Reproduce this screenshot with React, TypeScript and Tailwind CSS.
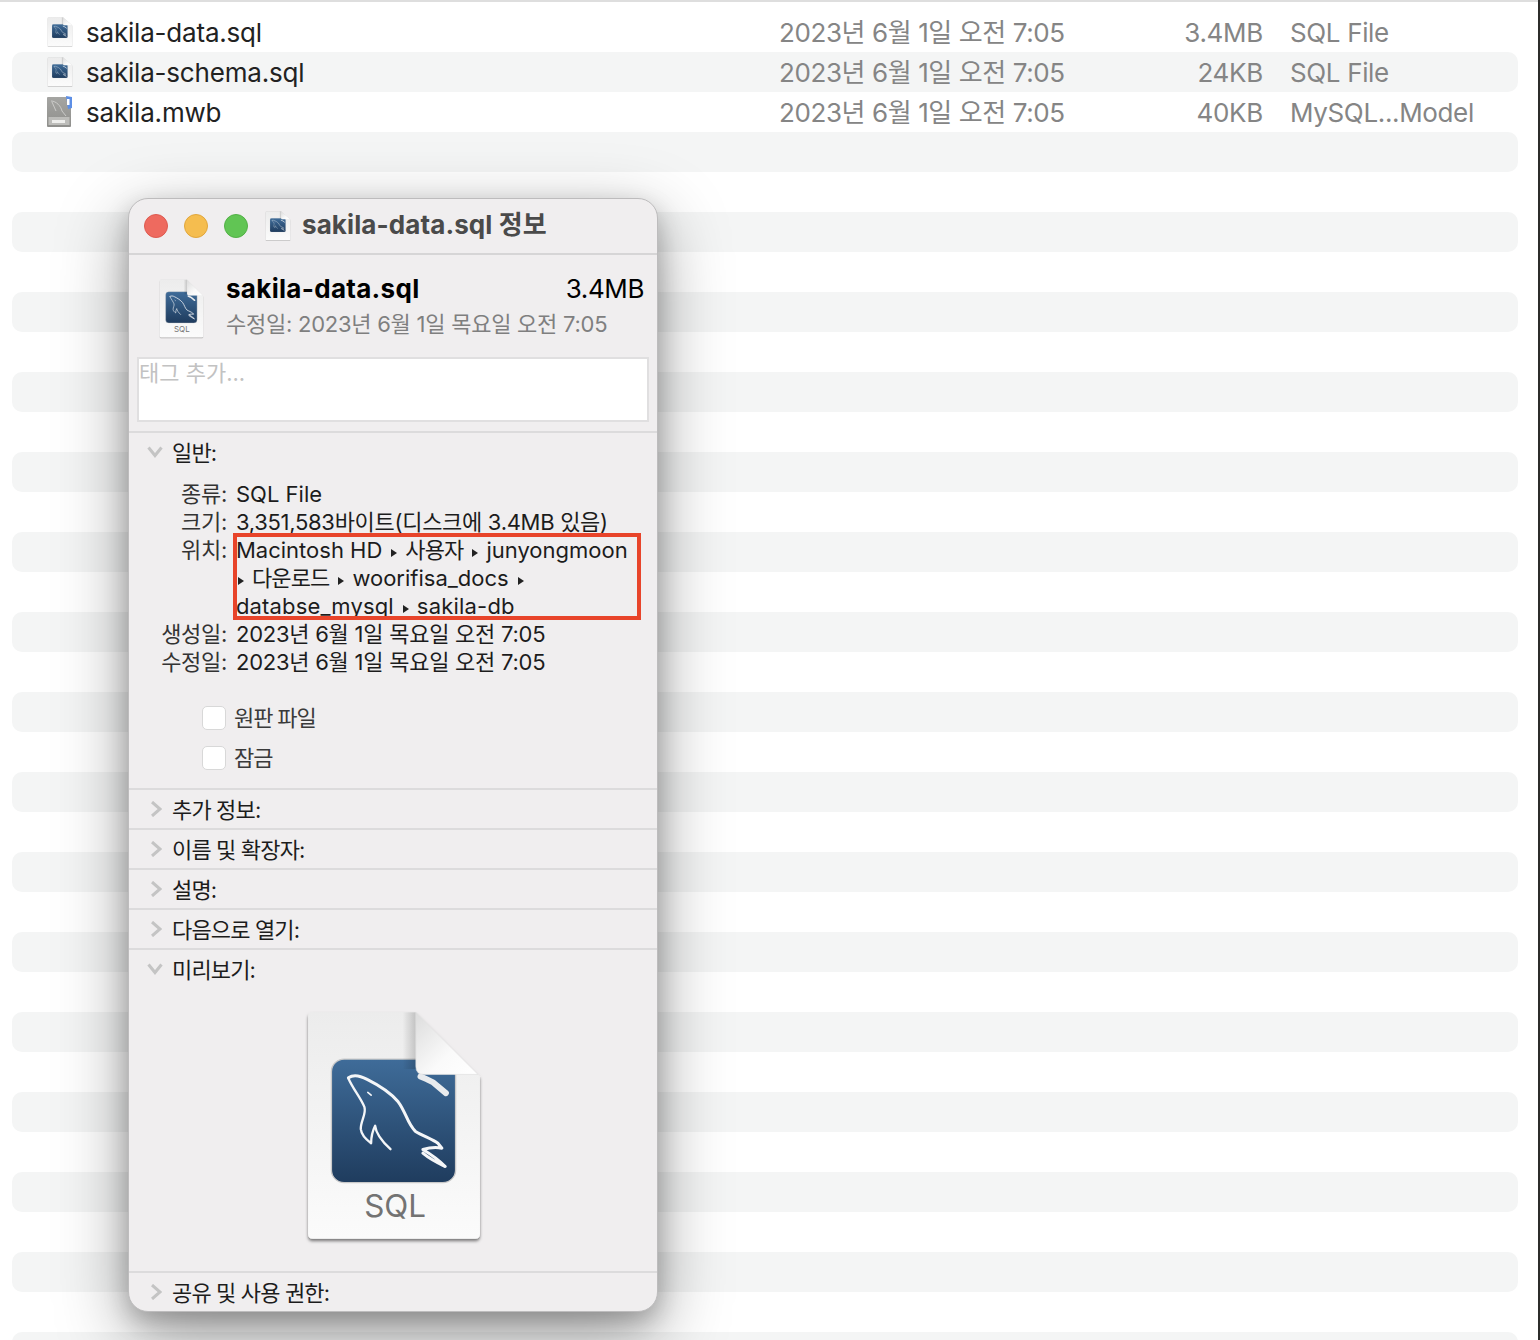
const sans = "font-['Inter','Noto_Sans_CJK_KR',sans-serif]";

const files = [
  { name: "sakila-data.sql", size: "3.4MB", kind: "SQL File", model: false },
  { name: "sakila-schema.sql", size: "24KB", kind: "SQL File", model: false },
  { name: "sakila.mwb", size: "40KB", kind: "MySQL...Model", model: true },
];

const SqlIcon = ({ label = false, className = "" }: { label?: boolean; className?: string }) => (
  <svg viewBox="40 30 545 710" preserveAspectRatio={label ? "xMidYMid meet" : "none"} className={className}>
    <defs>
      <linearGradient id="box" x1="0" y1="0" x2="0" y2="1">
        <stop offset="0" stopColor="#3f6c99" />
        <stop offset="1" stopColor="#1f3c5e" />
      </linearGradient>
      <linearGradient id="paper" x1="0" y1="0" x2="0" y2="1">
        <stop offset="0" stopColor="#ececec" />
        <stop offset="1" stopColor="#fbfbfb" />
      </linearGradient>
      <linearGradient id="fold" x1="0" y1="0" x2="1" y2="1">
        <stop offset="0" stopColor="#dcdcdc" />
        <stop offset=".6" stopColor="#fafafa" />
        <stop offset="1" stopColor="#ffffff" />
      </linearGradient>
      <linearGradient id="foldShade" x1="0" y1="0" x2="1" y2="0">
        <stop offset="0" stopColor="#000" stopOpacity="0" />
        <stop offset="1" stopColor="#000" stopOpacity=".18" />
      </linearGradient>
      <filter id="docShadow" x="-10%" y="-10%" width="120%" height="120%">
        <feDropShadow dx="0" dy="7" stdDeviation="5" floodColor="#000" floodOpacity=".5" />
      </filter>
    </defs>
    <path
      d="M68 40 H378 L570 232 V704 Q570 718 556 718 H69 Q55 718 55 704 V53 Q55 40 68 40 Z"
      fill="url(#paper)"
      filter="url(#docShadow)"
    />
    <g transform={label ? undefined : "translate(35 45) scale(.88)"}>
      <rect x="125" y="180" width="372" height="370" rx="38" fill="url(#box)" stroke="#c9c9c9" strokeWidth="4" />
      <g fill="none" stroke="#f4f6f8" strokeLinecap="round" strokeLinejoin="round">
        <path
          d="M176 236 C190 226 212 230 232 241 C262 256 300 278 325 308 C348 338 352 372 376 396 C398 410 428 420 444 432 L456 447 C436 443 416 446 399 451 C424 466 448 484 466 502 C440 490 418 478 399 462"
          strokeWidth="9"
        />
        <path
          d="M176 238 C190 270 214 298 224 324 C230 346 212 366 213 390 C215 408 230 422 244 432 C244 412 248 396 256 380 C258 400 276 426 302 450"
          strokeWidth="7"
        />
        <path d="M234 280 L244 288" strokeWidth="5" />
      </g>
      <path d="M392 232 L410 240 L430 250 L468 282" stroke="#e8ebee" strokeWidth="18" strokeLinecap="round" fill="none" />
    </g>
    <rect x="338" y="40" width="40" height="170" fill="url(#foldShade)" />
    <path d="M378 40 L564 226 H402 Q378 226 378 202 Z" fill="url(#fold)" stroke="#dedede" strokeWidth="2" />
    {label && (
      <text x="316" y="652" textAnchor="middle" fontSize="94" fill="#737373" fontFamily="Inter, sans-serif">
        SQL
      </text>
    )}
  </svg>
);

const ModelIcon = ({ className = "" }: { className?: string }) => (
  <svg viewBox="0 0 26 32" className={className}>
    <defs>
      <linearGradient id="gray" x1="0" y1="0" x2="0" y2="1">
        <stop offset="0" stopColor="#a5a5a2" />
        <stop offset="1" stopColor="#8f8f8c" />
      </linearGradient>
    </defs>
    <rect x="0" y="1" width="24" height="30" rx="1" fill="url(#gray)" />
    <rect x="1.5" y="21" width="21" height="8" fill="#bdbdba" />
    <rect x="5" y="24" width="13" height="3" fill="#eeeeec" />
    <path d="M4 5 C9 5 14 10 15 15 L19 20 M5 6 L9 15" stroke="#cfcfcd" strokeWidth=".9" fill="none" />
    <path d="M19 0 L25 1 V12 L21 13 Z" fill="#5d8fe6" />
    <rect x="20" y="3" width="2.5" height="6" fill="#fff" />
  </svg>
);

const Triangle = ({ first = false }: { first?: boolean }) => (
  <svg viewBox="0 0 6 8" className={`inline-block w-[6px] h-[8px] align-[1px] mr-[8px] ${first ? "ml-[2px]" : "ml-[9px]"}`}>
    <path d="M0 0 L6 4 L0 8 Z" fill="#222" />
  </svg>
);

const Chevron = ({ open = false }: { open?: boolean }) =>
  open ? (
    <svg viewBox="0 0 16 12" className="w-4 h-3 ml-[18px] mr-[9px]">
      <path d="M1.5 1.5 L8 9.5 L14.5 1.5" stroke="#c4c4c4" strokeWidth="3" fill="none" />
    </svg>
  ) : (
    <svg viewBox="0 0 12 16" className="w-3 h-4 ml-[21px] mr-[10px]">
      <path d="M2 1 L10 8 L2 15" stroke="#c4c4c4" strokeWidth="3" fill="none" />
    </svg>
  );

const SectionHead = ({ title, open = false }: { title: string; open?: boolean }) => (
  <div className="flex items-center h-10 shrink-0 text-[22px] tracking-[-0.85px] text-[#1c1c1c] border-t-2 border-[#dcdbdc]">
    <Chevron open={open} />
    <span className="pt-[2px]">{title}</span>
  </div>
);

const Detail = ({ label, children }: { label: string; children: React.ReactNode }) => (
  <div className="grid grid-cols-[98px_1fr] gap-x-[9px] leading-7 text-[22px] text-[#1c1c1c]">
    <span className="text-right text-[#333] tracking-[-0.3px]">{label}</span>
    <div className="whitespace-nowrap">{children}</div>
  </div>
);

const Ko = ({ children }: { children: React.ReactNode }) => <span className="tracking-[-0.9px]">{children}</span>;

const Check = ({ label }: { label: string }) => (
  <div className="flex items-center gap-2 h-10 pl-[73px] text-[22px] tracking-[-1.1px] text-[#3a3a3a]">
    <span className="w-6 h-6 rounded-[5px] bg-white border border-[#d8d8d8]" />
    {label}
  </div>
);

export default function App() {
  return (
    <div className={`relative h-[1340px] overflow-hidden bg-white flex ${sans}`}>
      {/* finder list */}
      <div className="flex-1 border-t-2 border-[#dedede] pt-[10px] pl-3 pr-5">
        {Array.from({ length: 34 }).map((_, i) => {
          const f = files[i];
          return (
            <div
              key={i}
              className={`grid grid-cols-[767px_321px_163px_1fr] items-center h-10 rounded-[10px] text-[26px] ${
                i % 2 === 1 ? "bg-[#f4f5f5]" : ""
              }`}
            >
              {f && (
                <>
                  <div className="flex items-center pl-[35px] text-[#222] tracking-[-0.2px]">
                    {f.model ? (
                      <ModelIcon className="w-[26px] h-8 mr-[13px]" />
                    ) : (
                      <SqlIcon className="w-[26px] h-[30px] mr-[13px]" />
                    )}
                    <span className="pt-px">{f.name}</span>
                  </div>
                  <div className="pt-px text-[#858585] tracking-[-0.4px]">2023년 6월 1일 오전 7:05</div>
                  <div className="pt-px text-right text-[#858585] tracking-[-0.3px]">{f.size}</div>
                  <div className="pt-px pl-[27px] text-[#858585] tracking-[-0.35px] whitespace-nowrap">{f.kind}</div>
                </>
              )}
            </div>
          );
        })}
      </div>
      <div className="w-[2px] bg-[#2c2c2a]" />

      {/* info window */}
      <div className="absolute left-[128px] top-[198px] w-[530px] h-[1114px] flex flex-col rounded-[20px] bg-[#f0eeef] border border-[#bdbcbd] overflow-hidden shadow-[0_22px_70px_rgba(0,0,0,0.38),0_10px_25px_rgba(0,0,0,0.22)]">
        <div className="flex items-center h-[56px] shrink-0 border-b-2 border-[#d6d5d6] pl-[15px]">
          <span className="w-6 h-6 rounded-full bg-[#ee6a5f] border border-[#dd5a50]" />
          <span className="w-6 h-6 rounded-full bg-[#f5bd4f] border border-[#e0a63c] ml-4" />
          <span className="w-6 h-6 rounded-full bg-[#61c554] border border-[#52b046] ml-4" />
          <SqlIcon className="w-[26px] h-[30px] ml-[17px] mr-[11px]" />
          <span className="pb-1 text-[26px] font-bold text-[#4a4a4a] tracking-[0.1px]">sakila-data.sql 정보</span>
        </div>

        <div className="flex h-[102px] shrink-0 pl-[29px] pr-[13px]">
          <SqlIcon label className="w-[47px] h-[60px] mt-[24px] mr-[21px]" />
          <div className="flex-1 pt-[16px]">
            <div className="flex justify-between text-[26px] leading-9 text-black">
              <span className="font-bold tracking-[0.3px]">sakila-data.sql</span>
              <span className="tracking-[-0.4px]">3.4MB</span>
            </div>
            <div className="text-[22px] leading-[34px] tracking-[-0.25px] text-[#7f7f7f]">수정일: 2023년 6월 1일 목요일 오전 7:05</div>
          </div>
        </div>

        <div className="mx-2 h-[65px] shrink-0 bg-white border-2 border-[#e0dfe0] text-[22px] leading-7 text-[#c2c2c2]">
          태그 추가...
        </div>

        <div className="mt-[9px] shrink-0">
          <SectionHead title="일반:" open />
          <div className="relative pt-[9px]">
            <Detail label="종류:">SQL File</Detail>
            <Detail label="크기:">
              <span className="tracking-[-0.3px]">3,351,583바이트(디스크에 3.4MB 있음)</span>
            </Detail>
            <Detail label="위치:">
              Macintosh HD
              <Triangle />
              <Ko>사용자</Ko>
              <Triangle />
              junyongmoon
            </Detail>
            <Detail label="">
              <Triangle first />
              <Ko>다운로드</Ko>
              <Triangle />
              woorifisa_docs
              <Triangle />
            </Detail>
            <Detail label="">
              <span className="tracking-[0.15px]">databse_mysql</span>
              <Triangle />
              <span className="tracking-[0.2px]">sakila-db</span>
            </Detail>
            <Detail label="생성일:">
              <span className="tracking-[-0.25px]">2023년 6월 1일 목요일 오전 7:05</span>
            </Detail>
            <Detail label="수정일:">
              <span className="tracking-[-0.25px]">2023년 6월 1일 목요일 오전 7:05</span>
            </Detail>
            {/* red annotation */}
            <div className="absolute left-[104px] top-[62px] w-[408px] h-[87px] border-[4px] border-[#e8442a]" />
          </div>
          <div className="pt-[22px] pb-[10px]">
            <Check label="원판 파일" />
            <Check label="잠금" />
          </div>
        </div>

        <SectionHead title="추가 정보:" />
        <SectionHead title="이름 및 확장자:" />
        <SectionHead title="설명:" />
        <SectionHead title="다음으로 열기:" />
        <SectionHead title="미리보기:" open />

        <div className="flex-1 flex justify-center items-start pt-[21px] pl-[1px]">
          <SqlIcon label className="w-[182px] h-[237px]" />
        </div>

        <SectionHead title="공유 및 사용 권한:" />
      </div>
    </div>
  );
}
